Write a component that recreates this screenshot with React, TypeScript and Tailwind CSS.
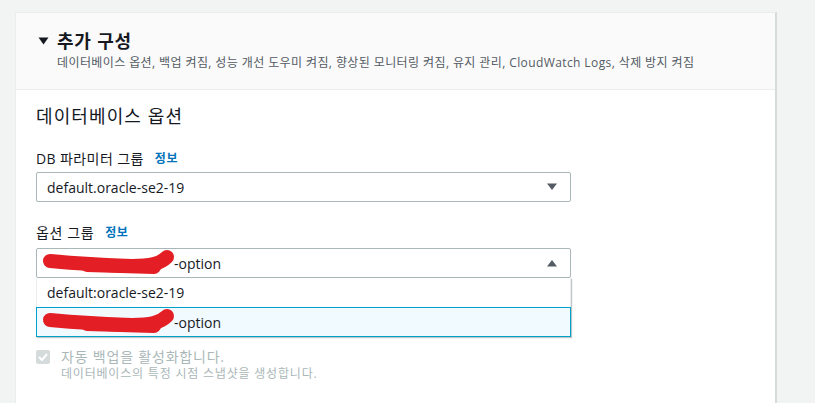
import React from 'react';

const font = { fontFamily: '"Open Sans", "Noto Sans CJK KR", sans-serif' };

const Caret: React.FC<{ up?: boolean }> = ({ up }) => (
  <svg width="12" height="8" viewBox="0 0 12 8" className="shrink-0">
    {up ? <path d="M1 7.5 L6 1 L11 7.5 Z" fill="#545b64" /> : <path d="M1 0.5 L11 0.5 L6 7 Z" fill="#545b64" />}
  </svg>
);

const Scribble: React.FC = () => (
  <svg width="140" height="30" viewBox="0 0 140 30" className="absolute left-[2px] top-[-6px]">
    <path
      d="M8 14 C30 16 60 18 90 19 C108 19 118 17 125 10"
      stroke="#e31e24"
      strokeWidth="14"
      strokeLinecap="round"
      fill="none"
    />
    <path d="M45 18 L112 20" stroke="#e31e24" strokeWidth="14" strokeLinecap="round" fill="none" />
  </svg>
);

const Redacted: React.FC = () => (
  <span className="relative inline-flex items-center">
    <span className="inline-block w-[134px]" />
    <Scribble />
    <span>-option</span>
  </span>
);

export default function App() {
  return (
    <div className="w-[815px] h-[403px] overflow-hidden bg-[#f2f3f3] pt-[12px] pl-[15px]" style={font}>
      <div className="w-[762px] h-[400px] bg-white border-l border-t border-[#eaeded] border-r-2 border-r-[#d5dbdb]">
        <div className="h-[77px] bg-[#fafafa] border-b border-[#eaeded] pl-[22px] pt-[16px]">
          <div className="flex items-center gap-[8px]">
            <svg width="11" height="8" viewBox="0 0 11 8">
              <path d="M0.5 0.5 L10.5 0.5 L5.5 7.5 Z" fill="#16191f" />
            </svg>
            <span className="text-[18px] leading-[24px] font-bold tracking-[0.8px] text-[#16191f]">추가 구성</span>
          </div>
          <div className="pl-[19px] mt-[2px] text-[12px] leading-[16px] tracking-[0.4px] text-[#545b64]">
            데이터베이스 옵션, 백업 켜짐, 성능 개선 도우미 켜짐, 향상된 모니터링 켜짐, 유지 관리, CloudWatch Logs, 삭제 방지 켜짐
          </div>
        </div>

        <div className="px-[20px] pt-[14px]">
          <h3 className="text-[18px] leading-[24px] tracking-[1.1px] text-[#16191f]">데이터베이스 옵션</h3>

          <div className="mt-[21px] flex items-center gap-[11px] text-[14px] leading-[20px] text-[#16191f]">
            <span className="tracking-[0.4px]">DB 파라미터 그룹</span>
            <span className="text-[12px] font-bold tracking-[0.6px] text-[#0073bb]">정보</span>
          </div>
          <div className="mt-[3px] w-[535px] h-[30px] border border-[#aab7b8] rounded-[2px] flex items-center justify-between pl-[10px] pr-[12px] text-[14px] text-[#16191f]">
            <span>default.oracle-se2-19</span>
            <Caret />
          </div>

          <div className="mt-[21px] flex items-center gap-[11px] text-[14px] leading-[20px] text-[#16191f]">
            <span className="tracking-[0.6px]">옵션 그룹</span>
            <span className="text-[12px] font-bold tracking-[0.6px] text-[#0073bb]">정보</span>
          </div>
          <div className="relative mt-[5px] w-[535px]">
            <div className="h-[30px] border border-[#aab7b8] rounded-[2px] flex items-center justify-between pl-[3px] pr-[12px] text-[14px] text-[#16191f]">
              <Redacted />
              <Caret up />
            </div>
            <div className="absolute left-0 top-[30px] w-[535px] bg-white shadow-[1px_1px_1px_0_rgba(0,28,36,0.25)] z-10 text-[14px] text-[#16191f]">
              <div className="h-[29px] flex items-center pl-[10px] border-l border-r border-[#eaeded]">default:oracle-se2-19</div>
              <div className="h-[30px] flex items-center pl-[3px] border border-[#00a1c9] bg-[#f1faff]">
                <Redacted />
              </div>
            </div>
          </div>

          <div className="mt-[70px] flex gap-[11px]">
            <div className="mt-[2px] w-[14px] h-[14px] rounded-[2px] bg-[#d5dbdb] flex items-center justify-center">
              <svg width="10" height="8" viewBox="0 0 10 8">
                <path d="M1 4 L4 7 L9 1" stroke="white" strokeWidth="2" fill="none" />
              </svg>
            </div>
            <div>
              <div className="text-[14px] leading-[18px] tracking-[0.8px] text-[#aab7b8]">자동 백업을 활성화합니다.</div>
              <div className="text-[12px] leading-[16px] tracking-[0.8px] text-[#aab7b8]">데이터베이스의 특정 시점 스냅샷을 생성합니다.</div>
            </div>
          </div>
        </div>
      </div>
    </div>
  );
}
